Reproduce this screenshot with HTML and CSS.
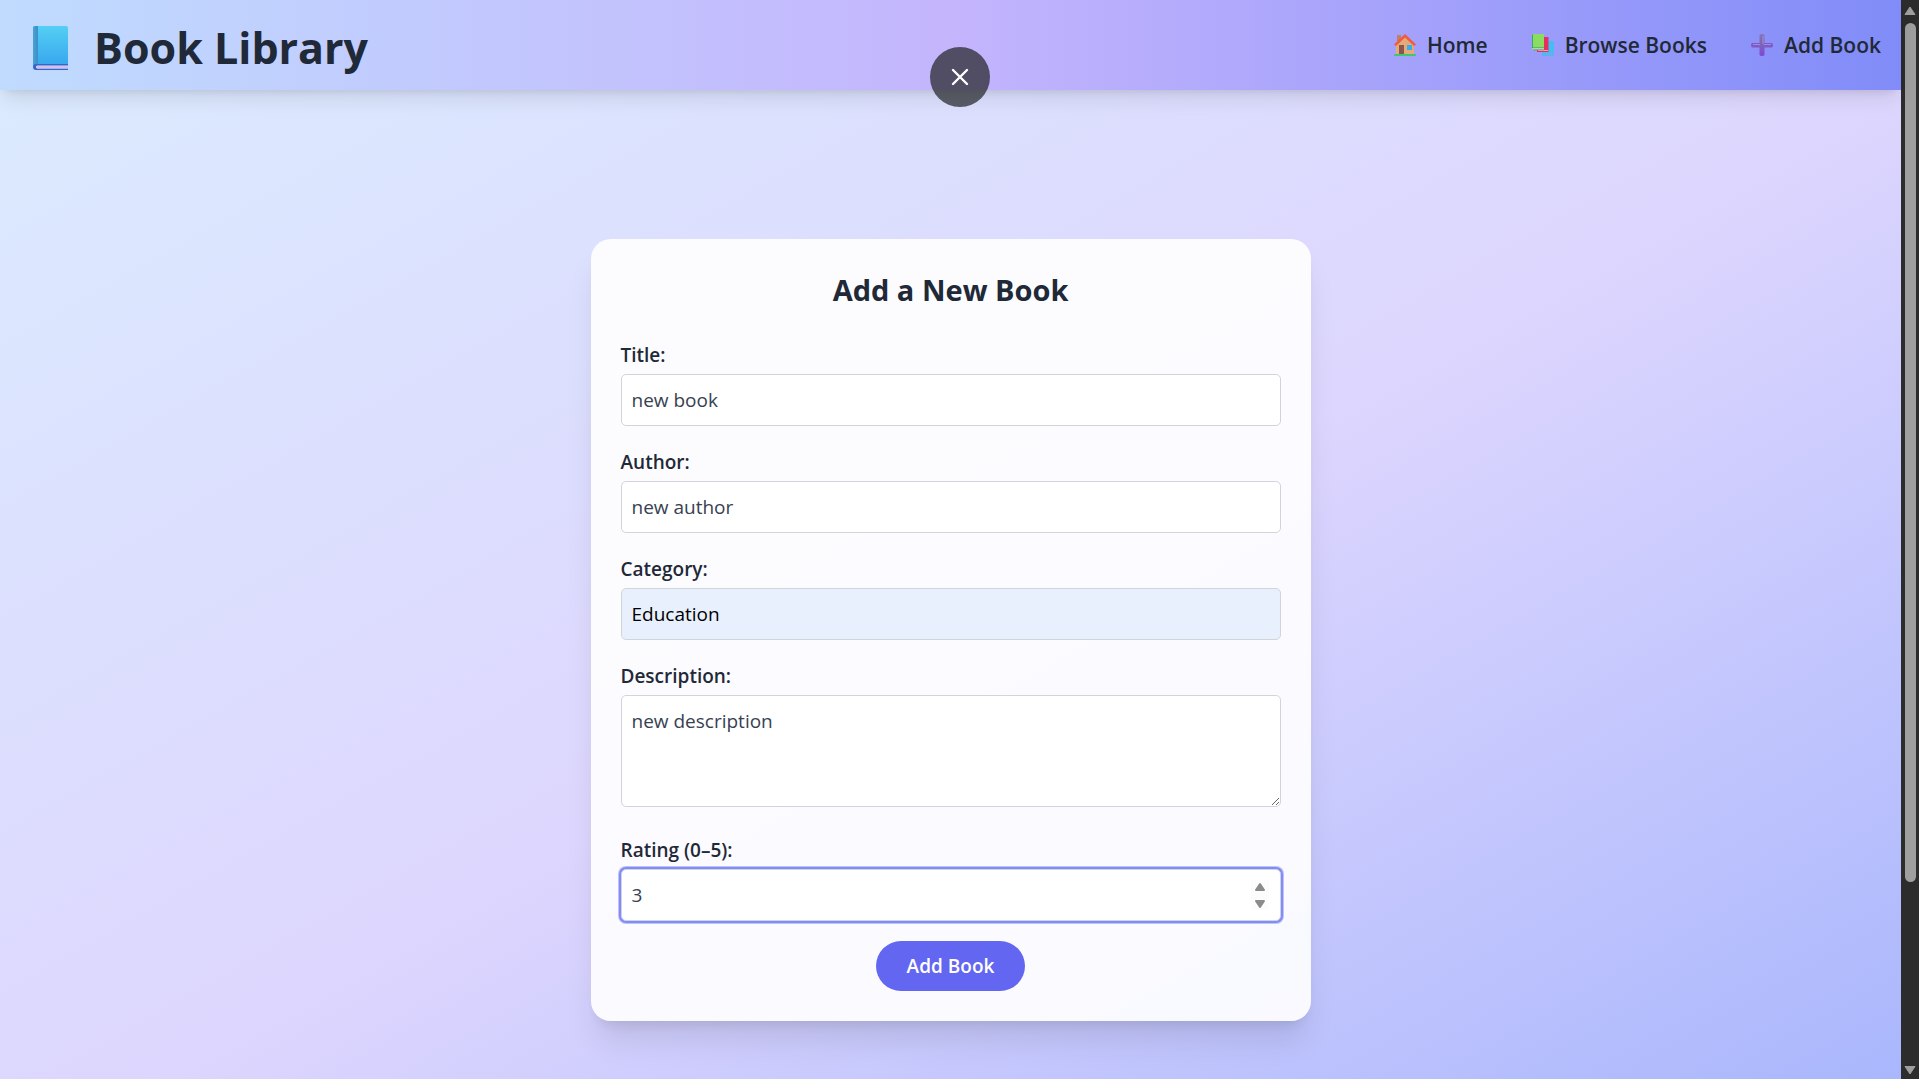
FILE: index.html
```html
<!DOCTYPE html>
<html lang="en">
<head>
<meta charset="utf-8">
<meta name="viewport" content="width=device-width, initial-scale=1">
<title>Book Library</title>
<link rel="stylesheet" href="styles.css">
</head>
<body>
<div class="window">
  <div class="page">
    <header class="header">
      <h1 class="brand">
        <svg class="brand-icon" viewBox="0 0 36 44" aria-hidden="true">
          <defs>
            <linearGradient id="cover" x1="0" y1="0" x2="0" y2="1"><stop offset="0" stop-color="#54cff4"/><stop offset="1" stop-color="#37a6ee"/></linearGradient>
            <linearGradient id="spine" x1="0" y1="0" x2="1" y2="0"><stop offset="0" stop-color="#4aa3d4"/><stop offset="1" stop-color="#3a8fc6"/></linearGradient>
          </defs>
          <path d="M2 0h31q2 0 2 2v38H0V2q0-2 2-2z" fill="url(#cover)"/>
          <path d="M2 0h3v38H0V2q0-2 2-2z" fill="url(#spine)"/>
          <path d="M35 38H3q-3 0-3 3t3 3h32v-1.500H4q-2-1.500 0-3h31z" fill="#3465cd"/>
          <path d="M35 39.500H4q-2 1.500 0 3h31z" fill="#d5bfe5"/>
        </svg>
        <span>Book Library</span>
      </h1>
      <nav class="nav" aria-label="Main">
        <a class="nav-link" href="#home">
          <svg class="nav-icon" viewBox="0 0 22 22" aria-hidden="true">
            <path d="M3 1h4v6H3z" fill="#b98364"/>
            <path d="M2 10l9-8 9 8v10H2z" fill="#e4ab78"/>
            <path d="M0 10.500L11 0l11 10.500-2 1.500-9-8.500L2 12z" fill="#f2593f"/>
            <path d="M5 11h5v9H5z" fill="#8a5650"/>
            <path d="M13 11h5v5h-5z" fill="#35aef0"/>
            <path d="M1 20h20q1 0 1 2H0q0-2 1-2z" fill="#40c66d"/>
          </svg>
          <span>Home</span>
        </a>
        <a class="nav-link" href="#browse">
          <svg class="nav-icon" viewBox="0 0 22 22" aria-hidden="true">
            <path d="M12 7h10v15H10v-3z" fill="#43bdf3"/>
            <path d="M11 19h11v1.500H11z" fill="#8d9fd8"/>
            <path d="M7 3h9.500v15H5v-2z" fill="#e5305f"/>
            <path d="M6 16h10v1H6z" fill="#efa5c4"/>
            <path d="M1 0h11v16H0V1z" fill="#8bdc62"/>
            <path d="M0 1l1-1v14H0z" fill="#3da66c"/>
            <path d="M0 14h12v1.500H1z" fill="#e5dff3"/>
            <path d="M0 13.500h12v.700H0zM1 15.500h11v.700H1z" fill="#3b945e"/>
          </svg>
          <span>Browse Books</span>
        </a>
        <a class="nav-link" href="#add">
          <svg class="nav-icon" viewBox="0 0 22 22" aria-hidden="true">
            <defs><linearGradient id="plus" x1="0" y1="0" x2="0" y2="1"><stop offset="0" stop-color="#8474b4"/><stop offset=".5" stop-color="#7c63bb"/><stop offset="1" stop-color="#8148d6"/></linearGradient></defs>
            <path d="M1.500 9h19q1.500 0 1.500 2.200t-1.500 2.300h-19Q0 13.500 0 11.200T1.500 9z" fill="#8059c9"/>
            <path d="M8.500 1.500Q8.500 0 11 0t2.500 1.500v19Q13.500 22 11 22t-2.500-1.500z" fill="url(#plus)"/>
            <path d="M2 10h7v1H2zM13 10h7v1h-7zM11.500 2h1v8h-1z" fill="#a08fd2"/>
          </svg>
          <span>Add Book</span>
        </a>
      </nav>
    </header>

    <main class="main">
      <form class="card">
        <h2 class="card-title">Add a New Book</h2>
        <div class="field">
          <label class="label" for="title">Title:</label>
          <input class="control" id="title" type="text" value="new book">
        </div>
        <div class="field">
          <label class="label" for="author">Author:</label>
          <input class="control" id="author" type="text" value="new author">
        </div>
        <div class="field">
          <label class="label" for="category">Category:</label>
          <input class="control control-autofilled" id="category" type="text" value="Education">
        </div>
        <div class="field field-area">
          <label class="label" for="description">Description:</label>
          <textarea class="control control-area" id="description">new description</textarea>
        </div>
        <div class="field">
          <label class="label" for="rating">Rating (0–5):</label>
          <div class="number">
            <input class="control control-active" id="rating" type="number" min="0" max="5" value="3">
            <svg class="stepper" viewBox="0 0 18 30" aria-hidden="true">
              <path d="M0 0h18v30H0z" fill="#fcfcfc"/>
              <path d="M9 4l4 6H5zM9 27l4-6H5z" fill="#8b8b8b" stroke="#8b8b8b" stroke-width="2" stroke-linejoin="round"/>
            </svg>
          </div>
        </div>
        <button class="submit" type="submit">Add Book</button>
      </form>
    </main>
  </div>

  <div class="scrollbar" aria-hidden="true">
    <svg class="scroll-arrow" viewBox="0 0 12 10"><path d="M6 1l5 7.500H1z" fill="#9f9f9f" stroke="#9f9f9f" stroke-linejoin="round"/></svg>
    <div class="scroll-track"><div class="scroll-thumb"></div></div>
    <svg class="scroll-arrow" viewBox="0 0 12 10"><path d="M6 9l5-7.500H1z" fill="#9f9f9f" stroke="#9f9f9f" stroke-linejoin="round"/></svg>
  </div>
</div>

<button class="close" type="button" aria-label="Close">
  <svg class="close-icon" viewBox="0 0 18 18" aria-hidden="true"><path d="M2 2l14 14M16 2L2 16" stroke="#fff" stroke-width="2.400" stroke-linecap="round"/></svg>
</button>
</body>
</html>
```
FILE: styles.css
```css
*,
*::before,
*::after {
  box-sizing: border-box;
}

body {
  margin: 0;
  color: #1f2937;
  font-family: "Segoe UI", "Open Sans", "Noto Sans", sans-serif;
  font-size: 19px;
  line-height: 30px;
}

.window {
  display: grid;
  grid-template-columns: minmax(0, 1fr) 18px;
  grid-template-rows: minmax(0, 1fr);
  height: 100vh;
  overflow: hidden;
}

.page {
  min-width: 0;
}

.header {
  position: relative;
  z-index: 1;
  display: flex;
  align-items: center;
  justify-content: space-between;
  padding: 20px 20px 20px 33px;
  background: linear-gradient(to right, #bfdbfe, #c4b5fd, #818cf8);
  box-shadow: 0 12px 19px -4px rgba(0, 0, 0, 0.1), 0 5px 8px -5px rgba(0, 0, 0, 0.1);
}

.brand {
  display: flex;
  align-items: center;
  gap: 25px;
  margin: 0;
  padding-top: 6px;
  font-size: 43px;
  font-weight: 700;
  line-height: 44px;
}

.brand-icon {
  width: 36px;
  height: 44px;
}

.nav {
  display: flex;
  gap: 44px;
}

.nav-link {
  display: flex;
  align-items: center;
  gap: 11px;
  color: inherit;
  font-size: 21px;
  font-weight: 600;
  text-decoration: none;
}

.nav-icon {
  width: 22px;
  height: 22px;
}

.main {
  display: flex;
  align-items: center;
  justify-content: center;
  min-height: 100vh;
  background: linear-gradient(to bottom right, #dbeafe, #ddd6fe, #a5b4fc);
}

.card {
  display: flex;
  flex-direction: column;
  gap: 20px;
  width: 100%;
  max-width: 720px;
  padding: 30px;
  border-radius: 20px;
  background: rgba(255, 255, 255, 0.9);
  box-shadow: 0 25px 31px -6px rgba(0, 0, 0, 0.1), 0 10px 12px -8px rgba(0, 0, 0, 0.1);
}

.card-title {
  margin: 0;
  padding: 1px 0 9px;
  font-size: 29px;
  font-weight: 700;
  line-height: 40px;
  text-align: center;
}

.field {
  display: flex;
  flex-direction: column;
  gap: 4px;
}

.field-area {
  padding-bottom: 7px;
}

.label {
  padding-top: 1px;
  font-weight: 600;
}

.control {
  display: block;
  width: 100%;
  margin: 0;
  padding: 10px;
  border: 1px solid #d1d5db;
  border-radius: 5px;
  outline: none;
  background: #fff;
  color: #374151;
  font: inherit;
}

.control-autofilled {
  background: #e8f0fe;
  color: #000;
}

.control-area {
  height: 112px;
  resize: vertical;
}

.control-active {
  box-shadow: 0 0 0 2px #818cf8, 0 0 0 3px rgba(129, 140, 248, 0.5);
  appearance: textfield;
}

.number {
  position: relative;
}

.stepper {
  position: absolute;
  top: 11px;
  right: 12px;
  width: 18px;
  height: 30px;
}

.submit {
  align-self: center;
  padding: 10px 31px;
  border: 0;
  border-radius: 25px;
  background: #6366f1;
  color: #fff;
  font: inherit;
  font-weight: 600;
}

.scrollbar {
  display: flex;
  flex-direction: column;
  align-items: center;
  gap: 7px;
  padding: 6px 0 4px;
  background: #2c2c2c;
}

.scroll-arrow {
  width: 12px;
  height: 10px;
}

.scroll-track {
  flex: 1;
  width: 11px;
}

.scroll-thumb {
  height: 83%;
  border-radius: 6px;
  background: #9f9f9f;
}

.close {
  position: fixed;
  top: 47px;
  left: 50%;
  display: grid;
  place-items: center;
  width: 60px;
  height: 60px;
  margin-left: -30px;
  padding: 0;
  border: 0;
  border-radius: 50%;
  background: rgba(32, 33, 36, 0.7);
  z-index: 2;
}

.close-icon {
  width: 18px;
  height: 18px;
}
```
